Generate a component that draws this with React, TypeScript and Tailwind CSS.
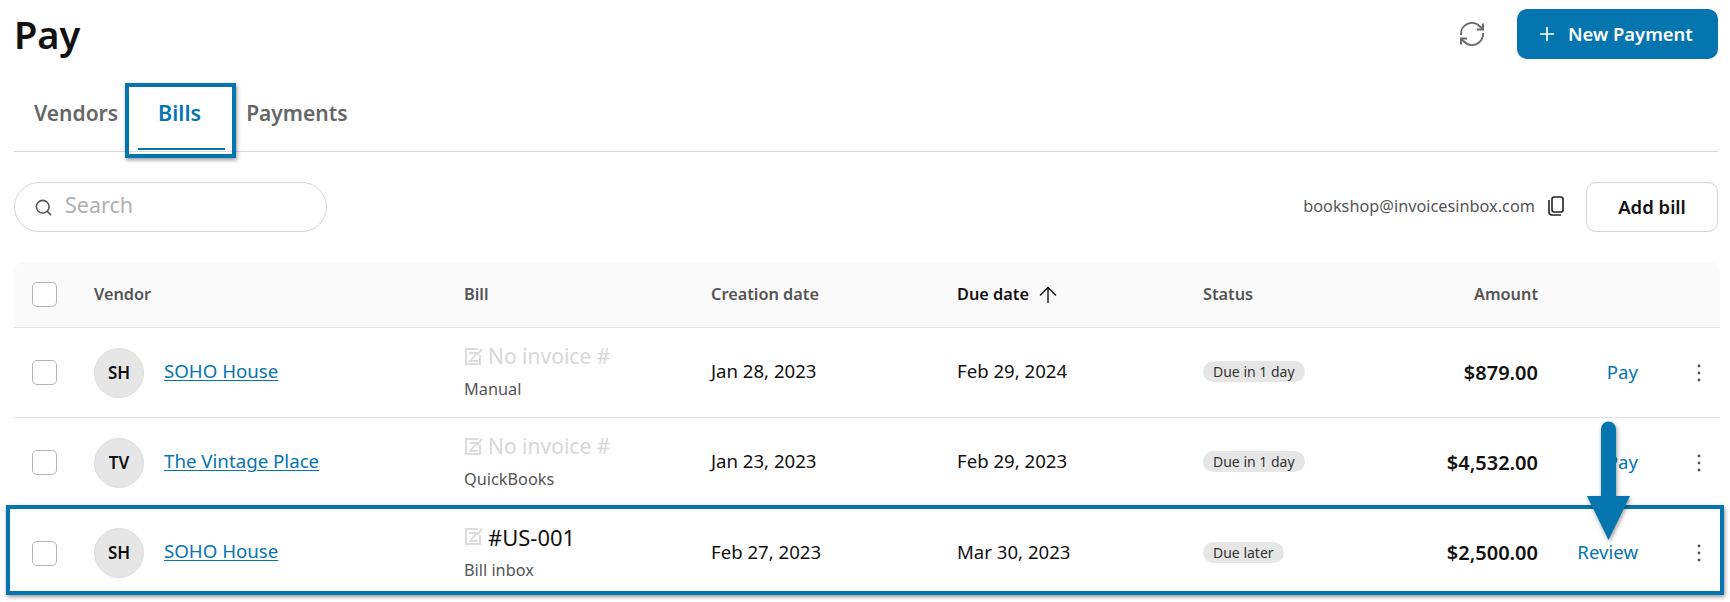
import React from "react";
import { Plus, Search, ArrowUp } from "lucide-react";

function InvoiceIcon() {
  return (
    <svg width="19" height="19" viewBox="0 0 19 19" fill="none" className="shrink-0">
      <path d="M14 2H2v15h14V8" stroke="#dcdcdc" strokeWidth="2" />
      <path d="M5 6h8L6 14h8" stroke="#dcdcdc" strokeWidth="1.8" />
      <path d="M13 8l5-6" stroke="#dcdcdc" strokeWidth="2" />
    </svg>
  );
}

function Kebab() {
  return (
    <svg width="6" height="18" viewBox="0 0 6 18" className="text-[#555]" fill="currentColor">
      <circle cx="3" cy="2" r="1.4" />
      <circle cx="3" cy="9" r="1.4" />
      <circle cx="3" cy="16" r="1.4" />
    </svg>
  );
}

function Refresh() {
  return (
    <svg width="28" height="28" viewBox="0 0 28 28" fill="none" stroke="#6b6b6b" strokeWidth="2" className="mr-[31px]">
      <path d="M3 15A11 11 0 0 1 22 6.5L24.5 9" />
      <path d="M25 3.5V9.5H19" />
      <path d="M25 13A11 11 0 0 1 6 21.5L3.5 19" />
      <path d="M3 24.5V18.5H9" />
    </svg>
  );
}

function Checkbox() {
  return <div className="ml-[18px] h-[25px] w-[25px] shrink-0 rounded-[5px] border border-[#b5b5b5] bg-white" />;
}

type RowData = {
  initials: string;
  vendor: string;
  bill: string;
  hasNumber: boolean;
  source: string;
  created: string;
  due: string;
  status: string;
  amount: string;
  action: string;
};

const rows: RowData[] = [
  { initials: "SH", vendor: "SOHO House", bill: "No invoice #", hasNumber: false, source: "Manual", created: "Jan 28, 2023", due: "Feb 29, 2024", status: "Due in 1 day", amount: "$879.00", action: "Pay" },
  { initials: "TV", vendor: "The Vintage Place", bill: "No invoice #", hasNumber: false, source: "QuickBooks", created: "Jan 23, 2023", due: "Feb 29, 2023", status: "Due in 1 day", amount: "$4,532.00", action: "Pay" },
  { initials: "SH", vendor: "SOHO House", bill: "#US-001", hasNumber: true, source: "Bill inbox", created: "Feb 27, 2023", due: "Mar 30, 2023", status: "Due later", amount: "$2,500.00", action: "Review" },
];

function Row({ r, last }: { r: RowData; last: boolean }) {
  return (
    <div className={`flex h-[90px] items-center ${last ? "" : "border-b border-[#e3e3e3]"}`}>
      <Checkbox />
      <div className="ml-[37px] flex w-[370px] shrink-0 items-center">
        <div className="flex h-[50px] w-[50px] items-center justify-center rounded-full border border-[#dedede] bg-[#e6e6e6] text-[17px] font-semibold text-[#111]">
          {r.initials}
        </div>
        <a className="mb-[3px] ml-[20px] text-[18.7px] text-[#0575b0] underline underline-offset-2">{r.vendor}</a>
      </div>
      <div className="mb-[4px] w-[247px] shrink-0">
        <div className="flex items-center gap-[5px] leading-[28px]">
          <InvoiceIcon />
          <span className={r.hasNumber ? "text-[22px] text-[#111]" : "text-[21px] text-[#d8d8d8]"}>{r.bill}</span>
        </div>
        <div className="mt-[9px] text-[16.3px] leading-[20px] text-[#555]">{r.source}</div>
      </div>
      <div className="mb-[3px] w-[246px] shrink-0 text-[18.6px] text-[#111]">{r.created}</div>
      <div className="mb-[3px] w-[246px] shrink-0 text-[18.6px] text-[#111]">{r.due}</div>
      <div className="mb-[3px] w-[200px] shrink-0">
        <span className="inline-block rounded-full bg-[#e6e6e6] px-[10px] text-[14px] leading-[21px] text-[#333]">{r.status}</span>
      </div>
      <div className="w-[135px] shrink-0 text-right text-[20px] font-semibold text-[#111]">{r.amount}</div>
      <div className="mb-[2px] w-[100px] shrink-0 text-right text-[18.6px] text-[#0575b0]">{r.action}</div>
      <div className="ml-[58px]"><Kebab /></div>
    </div>
  );
}

export default function App() {
  return (
    <div
      className="relative h-[602px] w-[1730px] overflow-hidden bg-white pl-[14px] pr-[12px] text-[#111]"
      style={{ fontFamily: '"Noto Sans", sans-serif' }}
    >
      <header className="flex h-[68px] items-center justify-between">
        <h1 className="text-[38px] font-semibold leading-none text-[#111]">Pay</h1>
        <div className="flex items-center">
          <Refresh />
          <button className="flex h-[50px] w-[201px] items-center gap-[10px] rounded-[10px] bg-[#0575b0] pl-[19px] text-[18.4px] font-semibold text-white">
            <Plus size={22} strokeWidth={1.8} />
            New Payment
          </button>
        </div>
      </header>

      <nav className="flex h-[84px] items-center border-b border-[#d9d9d9] pt-[7px]">
        <span className="ml-[20px] text-[21px] font-semibold leading-[28px] text-[#666]">Vendors</span>
        <span className="relative ml-[40px] text-[21.5px] font-semibold leading-[28px] text-[#0575b0]">
          Bills
          <span className="absolute -left-[20px] top-[49px] h-[2px] w-[87px] bg-[#0575b0]" />
        </span>
        <span className="ml-[45px] text-[21px] font-semibold leading-[28px] text-[#666]">Payments</span>
      </nav>

      <div className="mt-[30px] flex h-[50px] items-center">
        <div className="flex h-[50px] w-[313px] items-center rounded-full border border-[#d5d5d5] pl-[19px]">
          <Search size={19} strokeWidth={2} className="text-[#555]" />
          <span className="mb-[3px] ml-[12px] text-[21.5px] text-[#b0b0b0]">Search</span>
        </div>
        <span className="mb-[2px] ml-auto text-[16.3px] text-[#555]">bookshop@invoicesinbox.com</span>
        <svg width="17" height="20" viewBox="0 0 17 20" fill="none" stroke="#222" strokeWidth="1.6" className="mb-[2px] ml-[12px]">
          <rect x="5" y="1" width="11" height="15" rx="2" />
          <path d="M2 4v12a3 3 0 0 0 3 3h9" />
        </svg>
        <button className="ml-[22px] h-[50px] w-[132px] rounded-[10px] border border-[#d5d5d5] text-[18.5px] font-semibold text-[#111]">Add bill</button>
      </div>

      <section className="-mr-[2px] mt-[30px]">
        <div className="flex h-[66px] items-center rounded-t-[10px] border-b border-[#e3e3e3] bg-[#fafafa] text-[16.3px] font-semibold text-[#555]">
          <Checkbox />
          <div className="ml-[37px] w-[370px] shrink-0">Vendor</div>
          <div className="w-[247px] shrink-0">Bill</div>
          <div className="w-[246px] shrink-0">Creation date</div>
          <div className="flex w-[246px] shrink-0 items-center gap-[6px] text-[#111]">
            Due date
            <ArrowUp size={26} strokeWidth={1.3} />
          </div>
          <div className="w-[200px] shrink-0">Status</div>
          <div className="w-[135px] shrink-0 text-right">Amount</div>
        </div>
        {rows.map((r, i) => (
          <Row key={i} r={r} last={i === rows.length - 1} />
        ))}
      </section>

      {/* annotations */}
      <div className="absolute left-[125px] top-[83px] h-[75px] w-[111px] border-[4px] border-[#0575b0] shadow-[1px_2px_4px_rgba(0,0,0,0.4)]" />
      <div className="absolute left-[6px] top-[505px] h-[90px] w-[1718px] border-[4px] border-[#0575b0] shadow-[1px_2px_4px_rgba(0,0,0,0.4)]" />
      <svg width="50" height="124" viewBox="0 0 50 124" className="absolute left-[1584px] top-[420px] drop-shadow-[1px_2px_2px_rgba(0,0,0,0.4)]">
        <path d="M17 9a7.5 7.5 0 0 1 15 0v67h14L24.5 120 3 76h14z" fill="#0575b0" />
      </svg>
    </div>
  );
}
